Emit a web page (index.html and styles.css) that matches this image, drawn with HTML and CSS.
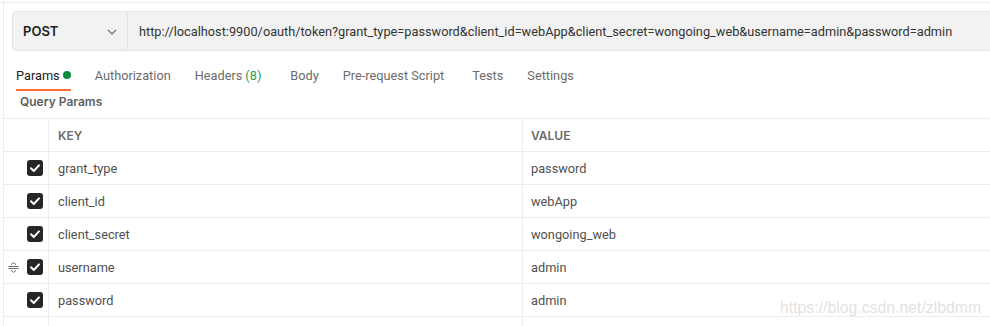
FILE: index.html
```html
<!DOCTYPE html>
<html>
<head>
<meta charset="utf-8">
<link rel="stylesheet" href="styles.css">
</head>
<body>
<div class="seam"></div>
<div class="main">
  <div class="top">
    <div class="urlbar">
      <div class="method">
        <span class="method-name">POST</span>
        <svg class="chev" width="10" height="6" viewBox="0 0 10 6"><path d="M1 1 L5 5 L9 1" fill="none" stroke="#6b6b6b" stroke-width="1.1"/></svg>
      </div>
      <div class="url">http://localhost:9900/oauth/token?grant_type=password&amp;client_id=webApp&amp;client_secret=wongoing_web&amp;username=admin&amp;password=admin</div>
    </div>
    <div class="tabs">
      <div class="tab active">Params <span class="dot"></span></div>
      <div class="tab">Authorization</div>
      <div class="tab headers">Headers <span class="count">(8)</span></div>
      <div class="tab">Body</div>
      <div class="tab prereq">Pre-request Script</div>
      <div class="tab">Tests</div>
      <div class="tab">Settings</div>
    </div>
    <div class="section-title">Query Params</div>
  </div>
  <div class="table">
    <div class="row head">
      <div class="c c1"></div>
      <div class="c c2">KEY</div>
      <div class="c c3">VALUE</div>
    </div>
    <div class="row">
      <div class="c c1"><span class="cb"><svg width="16" height="16" viewBox="0 0 16 16"><path d="M4 8.3 L6.8 11 L12 5.4" fill="none" stroke="#fff" stroke-width="2" stroke-linecap="round" stroke-linejoin="round"/></svg></span></div>
      <div class="c c2">grant_type</div>
      <div class="c c3">password</div>
    </div>
    <div class="row">
      <div class="c c1"><span class="cb"><svg width="16" height="16" viewBox="0 0 16 16"><path d="M4 8.3 L6.8 11 L12 5.4" fill="none" stroke="#fff" stroke-width="2" stroke-linecap="round" stroke-linejoin="round"/></svg></span></div>
      <div class="c c2">client_id</div>
      <div class="c c3">webApp</div>
    </div>
    <div class="row">
      <div class="c c1"><span class="cb"><svg width="16" height="16" viewBox="0 0 16 16"><path d="M4 8.3 L6.8 11 L12 5.4" fill="none" stroke="#fff" stroke-width="2" stroke-linecap="round" stroke-linejoin="round"/></svg></span></div>
      <div class="c c2">client_secret</div>
      <div class="c c3">wongoing_web</div>
    </div>
    <div class="row">
      <div class="c c1 drag-cell">
        <svg class="drag" width="11" height="11" viewBox="0 0 11 11"><path d="M3 2.6 L5.5 0.6 L8 2.6 M0.5 4.5 H10.5 M0.5 6.5 H10.5 M3 8.4 L5.5 10.4 L8 8.4" fill="none" stroke="#6b6b6b" stroke-width="1"/></svg>
        <span class="cb"><svg width="16" height="16" viewBox="0 0 16 16"><path d="M4 8.3 L6.8 11 L12 5.4" fill="none" stroke="#fff" stroke-width="2" stroke-linecap="round" stroke-linejoin="round"/></svg></span>
      </div>
      <div class="c c2">username</div>
      <div class="c c3">admin</div>
    </div>
    <div class="row">
      <div class="c c1"><span class="cb"><svg width="16" height="16" viewBox="0 0 16 16"><path d="M4 8.3 L6.8 11 L12 5.4" fill="none" stroke="#fff" stroke-width="2" stroke-linecap="round" stroke-linejoin="round"/></svg></span></div>
      <div class="c c2">password</div>
      <div class="c c3">admin</div>
    </div>
    <div class="row">
      <div class="c c1"></div>
      <div class="c c2"></div>
      <div class="c c3"></div>
    </div>
  </div>
</div>
<div class="watermark">https://blog.csdn.net/zlbdmm</div>
</body>
</html>
```
FILE: styles.css
```css
* { box-sizing: border-box; }
html, body {
  margin: 0;
  padding: 0;
  background: #ffffff;
  overflow: hidden;
  width: 990px;
  height: 326px;
}
body {
  font-family: Roboto, "Liberation Sans", sans-serif;
  font-size: 12.75px;
  color: #505050;
  position: relative;
}
.seam {
  height: 3px;
  border-bottom: 1px solid #ececec;
  position: relative;
}
.seam::before {
  content: "";
  position: absolute;
  left: 3px;
  top: 0;
  height: 3px;
  border-left: 1px solid #ececec;
}
.main {
  margin-left: 3px;
  border-left: 1px solid #ececec;
  height: 323px;
  overflow: hidden;
}
.top {
  padding-left: 8px;
  padding-top: 8px;
}
.urlbar {
  display: flex;
  height: 40px;
  width: 1000px;
  background: #f2f2f2;
  border: 1px solid #e4e4e4;
  border-radius: 4px;
}
.method {
  width: 115px;
  flex: none;
  display: flex;
  align-items: center;
  justify-content: space-between;
  padding: 0 10px 0 10px;
  border-right: 1px solid #e4e4e4;
}
.method-name {
  font-family: Inter, "Liberation Sans", sans-serif;
  font-weight: 600;
  font-size: 13px;
  color: #212121;
}
.chev { margin-top: 1px; }
.url {
  display: flex;
  align-items: center;
  padding-left: 11px;
  color: #333333;
  white-space: nowrap;
}
.tabs {
  display: flex;
  gap: 24px;
  padding-left: 4px;
  margin-top: 10px;
  height: 30px;
}
.tab {
  display: flex;
  align-items: center;
  height: 30px;
  color: #6b6b6b;
  white-space: nowrap;
  border-bottom: 2px solid transparent;
}
.tab.active {
  color: #212121;
  border-bottom-color: #ff6c37;
}
.tab.headers { margin-right: 5px; }
.tab.prereq { margin-right: 4px; }
.dot {
  display: inline-block;
  width: 8px;
  height: 8px;
  border-radius: 50%;
  background: #0a8a3c;
  margin-left: 3px;
}
.count {
  color: #2a9a52;
  margin-left: 3px;
}
.section-title {
  font-family: Inter, "Liberation Sans", sans-serif;
  font-weight: 600;
  font-size: 12px;
  color: #5e5e5e;
  padding-left: 8px;
  height: 27px;
  line-height: 22px;
}
.table {
  border-top: 1px solid #ececec;
}
.row {
  display: grid;
  grid-template-columns: 45px 474px 1fr;
  height: 33px;
  border-bottom: 1px solid #ececec;
}
.c {
  display: flex;
  align-items: center;
  border-right: 1px solid #ececec;
  white-space: nowrap;
}
.c3 { border-right: none; padding-left: 8px; }
.c2 { padding-left: 9px; }
.c1 {
  justify-content: flex-end;
  padding-right: 5px;
}
.drag-cell {
  justify-content: space-between;
  padding-left: 4px;
}
.head .c2, .head .c3 {
  font-family: Inter, "Liberation Sans", sans-serif;
  font-weight: 600;
  font-size: 12px;
  color: #6b6b6b;
}
.cb {
  width: 16px;
  height: 16px;
  border-radius: 3px;
  background: #262626;
  display: block;
}
.cb svg { display: block; }
.watermark {
  position: absolute;
  left: 780px;
  top: 299px;
  font-family: "Liberation Sans", Arial, sans-serif;
  font-size: 15.8px;
  color: rgba(200, 200, 200, 0.55);
  white-space: nowrap;
}
```
